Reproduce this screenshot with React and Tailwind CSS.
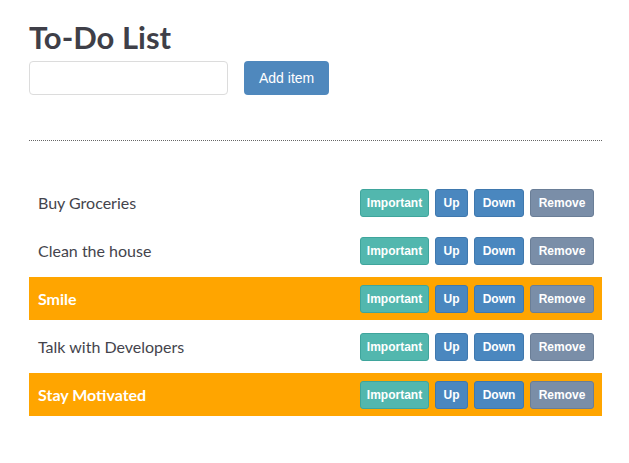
const items = [
  { id: 1, text: "Buy Groceries", important: false },
  { id: 2, text: "Clean the house", important: false },
  { id: 3, text: "Smile", important: true },
  { id: 4, text: "Talk with Developers", important: false },
  { id: 5, text: "Stay Motivated", important: true },
];

const btn =
  "h-[28px] rounded-[3px] border text-[12px] font-bold text-white leading-none font-['Liberation_Sans',Arial,sans-serif]";

export default function App() {
  return (
    <div className="min-h-[463px] bg-white px-[29px] pt-[17px] font-['Lato','Liberation_Sans',sans-serif] text-[#3f3f48]">
      <h1 className="text-[31px] font-bold leading-[40px]">To-Do List</h1>
      <div className="mt-[4px] flex items-center gap-[16px]">
        <input className="h-[34px] w-[199px] rounded-[4px] border border-[#dcdcdc] px-2 outline-none" />
        <button className="h-[34px] rounded-[4px] bg-[#4f88bd] px-[15px] text-[14px] text-white font-['Liberation_Sans',Arial,sans-serif]">
          Add item
        </button>
      </div>
      <div className="mt-[45px] w-[573px] border-t border-dotted border-[#666]" />
      <ul className="mt-[40px] flex w-[573px] flex-col gap-[5px]">
        {items.map((item) => (
          <li
            key={item.id}
            className={`flex h-[43px] items-center justify-between pl-[9px] pr-[8px] text-[16px] ${
              item.important ? "bg-[#ffa500] text-white" : "text-[#44444c]"
            }`}
          >
            <span className={item.important ? "font-bold" : ""}>{item.text}</span>
            <div className="flex gap-[6px]">
              <button className={`${btn} w-[69px] border-[#3fa59c] bg-[#52b7ae]`}>Important</button>
              <button className={`${btn} w-[33px] border-[#3f78ae] bg-[#4a87bf]`}>Up</button>
              <button className={`${btn} w-[50px] border-[#3f78ae] bg-[#4a87bf]`}>Down</button>
              <button className={`${btn} w-[64px] border-[#6a7e97] bg-[#7a8ea8]`}>Remove</button>
            </div>
          </li>
        ))}
      </ul>
    </div>
  );
}
